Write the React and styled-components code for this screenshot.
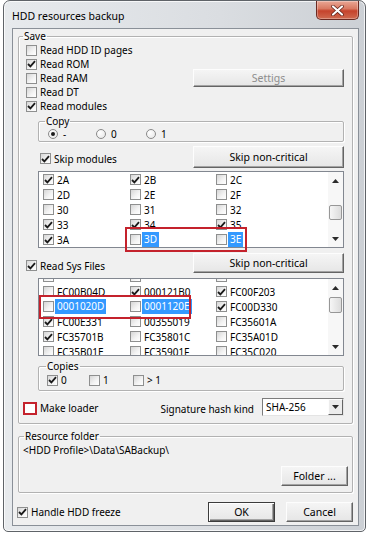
import React from 'react';
import styled, { createGlobalStyle, css } from 'styled-components';

const GlobalStyle = createGlobalStyle`
  html, body {
    margin: 0;
    padding: 0;
    background: #fff;
  }
  body {
    font-family: "Noto Sans", "Open Sans", sans-serif;
    font-size: 10px;
    line-height: 14px;
    color: #000;
  }
  * {
    box-sizing: border-box;
  }
`;

// Window chrome
const Window = styled.div`
  width: 363px;
  height: 532px;
  margin-left: 3px;
  border: 1px solid #5f6368;
  border-radius: 7px 7px 5px 5px;
  background: linear-gradient(to right, #e7eaed 0%, #dadde1 60%, #ccd0d5 100%);
  box-shadow: inset 0 0 0 1px rgba(255, 255, 255, 0.75);
  padding: 0 6px 5px 8px;
  display: flex;
  flex-direction: column;
`;

const TitleBar = styled.div`
  height: 27px;
  flex: none;
  display: flex;
  justify-content: space-between;
`;

const Title = styled.span`
  align-self: center;
  font-size: 10.5px;
  padding-top: 2px;
`;

const CloseButton = styled.div`
  width: 43px;
  height: 19px;
  border: 1px solid #6b2a22;
  border-top: none;
  border-radius: 0 0 5px 5px;
  background: linear-gradient(#eaa795 0%, #d97a63 42%, #c5432c 55%, #cf6a50 100%);
  box-shadow: inset 0 0 0 1px rgba(255, 255, 255, 0.3);
  display: flex;
  align-items: center;
  justify-content: center;
`;

const Client = styled.div`
  flex: 1;
  background: #f0f0f0;
  border: 1px solid #8a9098;
  padding: 0 5px;
  display: flex;
  flex-direction: column;
`;

// Group boxes
const Group = styled.fieldset`
  margin: ${(p) => p.$m || '0'};
  padding: ${(p) => p.$p || '0'};
  border: 1px solid #b2b2b2;
  border-radius: 2px;
  box-shadow: inset 1px 1px 0 #fff, 1px 1px 0 #fff;
  min-width: 0;
  display: flex;
  flex-direction: column;
`;

const Legend = styled.legend`
  padding: 0 1px;
  margin-left: ${(p) => p.$ml || 0}px;
  line-height: 14px;
`;

// Rows
const CheckRow = styled.div`
  height: 14px;
  display: flex;
  align-items: center;
  justify-content: space-between;
`;

const ActionRow = styled.div`
  height: ${(p) => p.$h}px;
  margin-top: ${(p) => p.$mt}px;
  display: flex;
  align-items: center;
  justify-content: space-between;
`;

const Nudge = styled.div`
  display: flex;
  margin-left: ${(p) => p.$ml || 0}px;
  margin-top: ${(p) => p.$mt || 0}px;
`;

const OptionRow = styled.div`
  height: ${(p) => p.$h || 14}px;
  display: flex;
  align-items: center;
`;

const Option = styled.div`
  width: ${(p) => p.$w}px;
  display: flex;
  align-items: center;
`;

const MakeRow = styled.div`
  height: 18px;
  margin-top: 7px;
  display: flex;
  align-items: center;
  justify-content: space-between;
`;

const HashField = styled.div`
  display: flex;
  align-items: center;
  gap: 8px;
`;

const HashLabel = styled.span`
  padding-top: 3px;
`;

const PathText = styled.div`
  height: 14px;
  white-space: nowrap;
`;

const FolderRow = styled.div`
  display: flex;
  justify-content: flex-end;
  margin-top: 9px;
`;

const BottomRow = styled.div`
  height: 20px;
  margin-top: 9px;
  display: flex;
  align-items: center;
  justify-content: space-between;
`;

const ButtonGroup = styled.div`
  display: flex;
  gap: 11px;
`;

// Controls
const CheckLabel = styled.span`
  display: inline-flex;
  align-items: center;
  gap: 3px;
  white-space: nowrap;
`;

const Box = styled.span`
  flex: none;
  width: 11px;
  height: 11px;
  border: 1px solid #8e8f8f;
  background: linear-gradient(135deg, #d6d6d6 0%, #f4f4f4 60%, #fff 100%);
  display: inline-flex;
  align-items: center;
  justify-content: center;
  ${(p) =>
    p.$red &&
    css`
      width: 14px;
      height: 13px;
      border: 2px solid #c4222c;
      background: #fff;
    `}
`;

const Label = styled.span`
  ${(p) =>
    p.$selected &&
    css`
      background: #3399ff;
      color: #fff;
      padding: 0 2px;
      margin-left: -2px;
      line-height: 15px;
    `}
`;

const RadioDot = styled.span`
  flex: none;
  width: 10px;
  height: 10px;
  border-radius: 50%;
  border: 1px solid #8a8a8a;
  background: radial-gradient(circle at 35% 35%, #fff 0%, #e4e4e4 100%);
  display: inline-flex;
  align-items: center;
  justify-content: center;
  margin-right: 5px;
  &::after {
    content: '';
    width: 4px;
    height: 4px;
    border-radius: 50%;
    background: ${(p) => (p.$on ? '#1c1c1c' : 'transparent')};
  }
`;

const Button = styled.button`
  width: ${(p) => p.$w}px;
  height: ${(p) => p.$h || 20}px;
  flex: none;
  padding: 0;
  font: inherit;
  font-size: 10.5px;
  line-height: 14px;
  color: ${(p) => (p.disabled ? '#8d8d8d' : '#000')};
  background: linear-gradient(#f5f5f5, #e6e6e6);
  border: 1px solid;
  border-color: #fdfdfd #646464 #646464 #fdfdfd;
  box-shadow: inset -1px -1px 0 #a3a3a3;
  ${(p) =>
    p.$default &&
    css`
      border-color: #3c3c3c;
      box-shadow: inset 1px 1px 0 #fff, inset -1px -1px 0 #646464, inset -2px -2px 0 #a3a3a3;
    `}
`;

const Combo = styled.div`
  width: 82px;
  height: 18px;
  border: 1px solid;
  border-color: #7c7c7c #e4e4e4 #e4e4e4 #7c7c7c;
  background: #fff;
  display: flex;
`;

const ComboText = styled.span`
  flex: 1;
  padding: 1px 0 0 3px;
`;

const ComboButton = styled.span`
  width: 15px;
  background: #ececec;
  border: 1px solid;
  border-color: #fdfdfd #646464 #646464 #fdfdfd;
  display: flex;
  align-items: center;
  justify-content: center;
`;

// List boxes
const ListWrap = styled.div`
  position: relative;
  margin: ${(p) => p.$mt}px 0 0 12px;
`;

const ListBox = styled.div`
  height: ${(p) => p.$h}px;
  border: 1px solid #828790;
  background: #fff;
  display: flex;
  overflow: hidden;
`;

const ListRows = styled.div`
  flex: 1;
  display: grid;
  grid-template-columns: 87px 86px 1fr;
  grid-auto-rows: 15px;
  align-content: start;
  align-items: center;
  padding-left: 4px;
  margin-top: ${(p) => p.$offset}px;
`;

const ScrollBar = styled.div`
  width: 15px;
  flex: none;
  background: #f7f7f7;
  display: flex;
  flex-direction: column;
`;

const ScrollArrow = styled.div`
  height: 17px;
  flex: none;
  display: flex;
  align-items: center;
  justify-content: center;
`;

const ScrollTrack = styled.div`
  flex: 1;
`;

const Thumb = styled.div`
  margin: ${(p) => p.$top}px 1px 0;
  height: ${(p) => p.$h}px;
  border: 1px solid #979797;
  border-radius: 2px;
  background: linear-gradient(to right, #f6f6f6, #dcdcdc);
`;

const Mark = styled.div`
  position: absolute;
  left: ${(p) => p.$x}px;
  top: ${(p) => p.$y}px;
  width: ${(p) => p.$w}px;
  height: ${(p) => p.$h}px;
  border: 2px solid #c4222c;
  pointer-events: none;
`;

const Tick = () => (
  <svg width="9" height="8" viewBox="0 0 9 8">
    <path d="M1 4 L3.4 6.4 L8 1.2" stroke="#1a1a1a" strokeWidth="1.8" fill="none" />
  </svg>
);

const Arrow = ({ down }) => (
  <svg width="7" height="4" viewBox="0 0 7 4">
    <polygon points={down ? '0,0 7,0 3.5,4' : '0,4 7,4 3.5,0'} fill="#2b2b2b" />
  </svg>
);

function Check({ checked, red, label, selected }) {
  return (
    <CheckLabel>
      <Box $red={red}>{checked && <Tick />}</Box>
      {label && <Label $selected={selected}>{label}</Label>}
    </CheckLabel>
  );
}

function Radio({ on, label, w }) {
  return (
    <Option $w={w}>
      <RadioDot $on={on} />
      <span>{label}</span>
    </Option>
  );
}

function Scroller({ top, h }) {
  return (
    <ScrollBar>
      <ScrollArrow>
        <Arrow />
      </ScrollArrow>
      <ScrollTrack>
        <Thumb $top={top} $h={h} />
      </ScrollTrack>
      <ScrollArrow>
        <Arrow down />
      </ScrollArrow>
    </ScrollBar>
  );
}

const modules = [
  ['2A', true], ['2B', true], ['2C', false],
  ['2D', false], ['2E', false], ['2F', false],
  ['30', false], ['31', false], ['32', false],
  ['33', true], ['34', true], ['35', true],
  ['3A', true], ['3D', false, true], ['3E', false, true],
];

const sysFiles = [
  ['', false], ['', false], ['', false],
  ['FC00B04D', false], ['000121B0', true], ['FC00F203', true],
  ['0001020D', false, true], ['0001120E', false, true], ['FC00D330', true],
  ['FC00E331', true], ['00355019', false], ['FC35601A', false],
  ['FC35701B', true], ['FC35801C', false], ['FC35A01D', false],
  ['FC35B01E', false], ['FC35901F', false], ['FC35C020', false],
];

export default function App() {
  return (
    <>
      <GlobalStyle />
      <Window>
        <TitleBar>
          <Title>HDD resources backup</Title>
          <CloseButton>
            <svg width="13" height="11" viewBox="0 0 13 11">
              <path d="M2 1.5 L11 9.5 M11 1.5 L2 9.5" stroke="#5a1d14" strokeWidth="3.6" strokeLinecap="round" />
              <path d="M2 1.5 L11 9.5 M11 1.5 L2 9.5" stroke="#fff" strokeWidth="2.2" strokeLinecap="round" />
            </svg>
          </CloseButton>
        </TitleBar>

        <Client>
          <Group $p="0 8px 7px 7px">
            <Legend $ml={-3}>Save</Legend>
            <CheckRow>
              <Check label="Read HDD ID pages" />
            </CheckRow>
            <CheckRow>
              <Check checked label="Read ROM" />
            </CheckRow>
            <CheckRow>
              <Check label="Read RAM" />
              <Button disabled $w={151} $h={18}>
                Settigs
              </Button>
            </CheckRow>
            <CheckRow>
              <Check label="Read DT" />
            </CheckRow>
            <CheckRow>
              <Check checked label="Read modules" />
            </CheckRow>

            <Group $m="1px 0 0 12px" $p="0 9px 1px">
              <Legend $ml={-3}>Copy</Legend>
              <OptionRow $h={12}>
                <Radio on label="-" w={48} />
                <Radio label="0" w={50} />
                <Radio label="1" w={50} />
              </OptionRow>
            </Group>

            <ActionRow $mt={4} $h={22}>
              <Nudge $ml={14} $mt={3}>
                <Check checked label="Skip modules" />
              </Nudge>
              <Button $w={151} $h={22}>
                Skip non-critical
              </Button>
            </ActionRow>

            <ListWrap $mt={3}>
              <ListBox $h={77}>
                <ListRows $offset={0}>
                  {modules.map(([name, on, sel]) => (
                    <Check key={name} checked={on} label={name} selected={sel} />
                  ))}
                </ListRows>
                <Scroller top={16} h={15} />
              </ListBox>
              <Mark $x={87} $y={56} $w={122} $h={25} />
            </ListWrap>

            <ActionRow $mt={5} $h={20}>
              <Nudge $mt={5}>
                <Check checked label="Read Sys Files" />
              </Nudge>
              <Button $w={151} $h={20}>
                Skip non-critical
              </Button>
            </ActionRow>

            <ListWrap $mt={5}>
              <ListBox $h={78}>
                <ListRows $offset={-10}>
                  {sysFiles.map(([name, on, sel], i) => (
                    <Check key={i} checked={on} label={name} selected={sel} />
                  ))}
                </ListRows>
                <Scroller top={1} h={16} />
              </ListBox>
              <Mark $x={1} $y={17} $w={152} $h={24} />
            </ListWrap>

            <Group $m="3px 0 0 12px" $p="0 8px 3px">
              <Legend $ml={-1}>Copies</Legend>
              <OptionRow>
                <Option $w={42}>
                  <Check checked label="0" />
                </Option>
                <Option $w={44}>
                  <Check label="1" />
                </Option>
                <Option $w={44}>
                  <Check label="> 1" />
                </Option>
              </OptionRow>
            </Group>

            <MakeRow>
              <Nudge $ml={-3} $mt={2}>
                <Check red label="Make loader" />
              </Nudge>
              <HashField>
                <HashLabel>Signature hash kind</HashLabel>
                <Combo>
                  <ComboText>SHA-256</ComboText>
                  <ComboButton>
                    <Arrow down />
                  </ComboButton>
                </Combo>
              </HashField>
            </MakeRow>
          </Group>

          <Group $m="5px 0 0" $p="0 4px 6px 4px">
            <Legend $ml={1}>Resource folder</Legend>
            <PathText>{'<HDD Profile>\\Data\\SABackup\\'}</PathText>
            <FolderRow>
              <Button $w={67}>Folder ...</Button>
            </FolderRow>
          </Group>

          <BottomRow>
            <Nudge $ml={-1}>
              <Check checked label="Handle HDD freeze" />
            </Nudge>
            <ButtonGroup>
              <Button $default $w={67}>
                OK
              </Button>
              <Button $w={67}>Cancel</Button>
            </ButtonGroup>
          </BottomRow>
        </Client>
      </Window>
    </>
  );
}
